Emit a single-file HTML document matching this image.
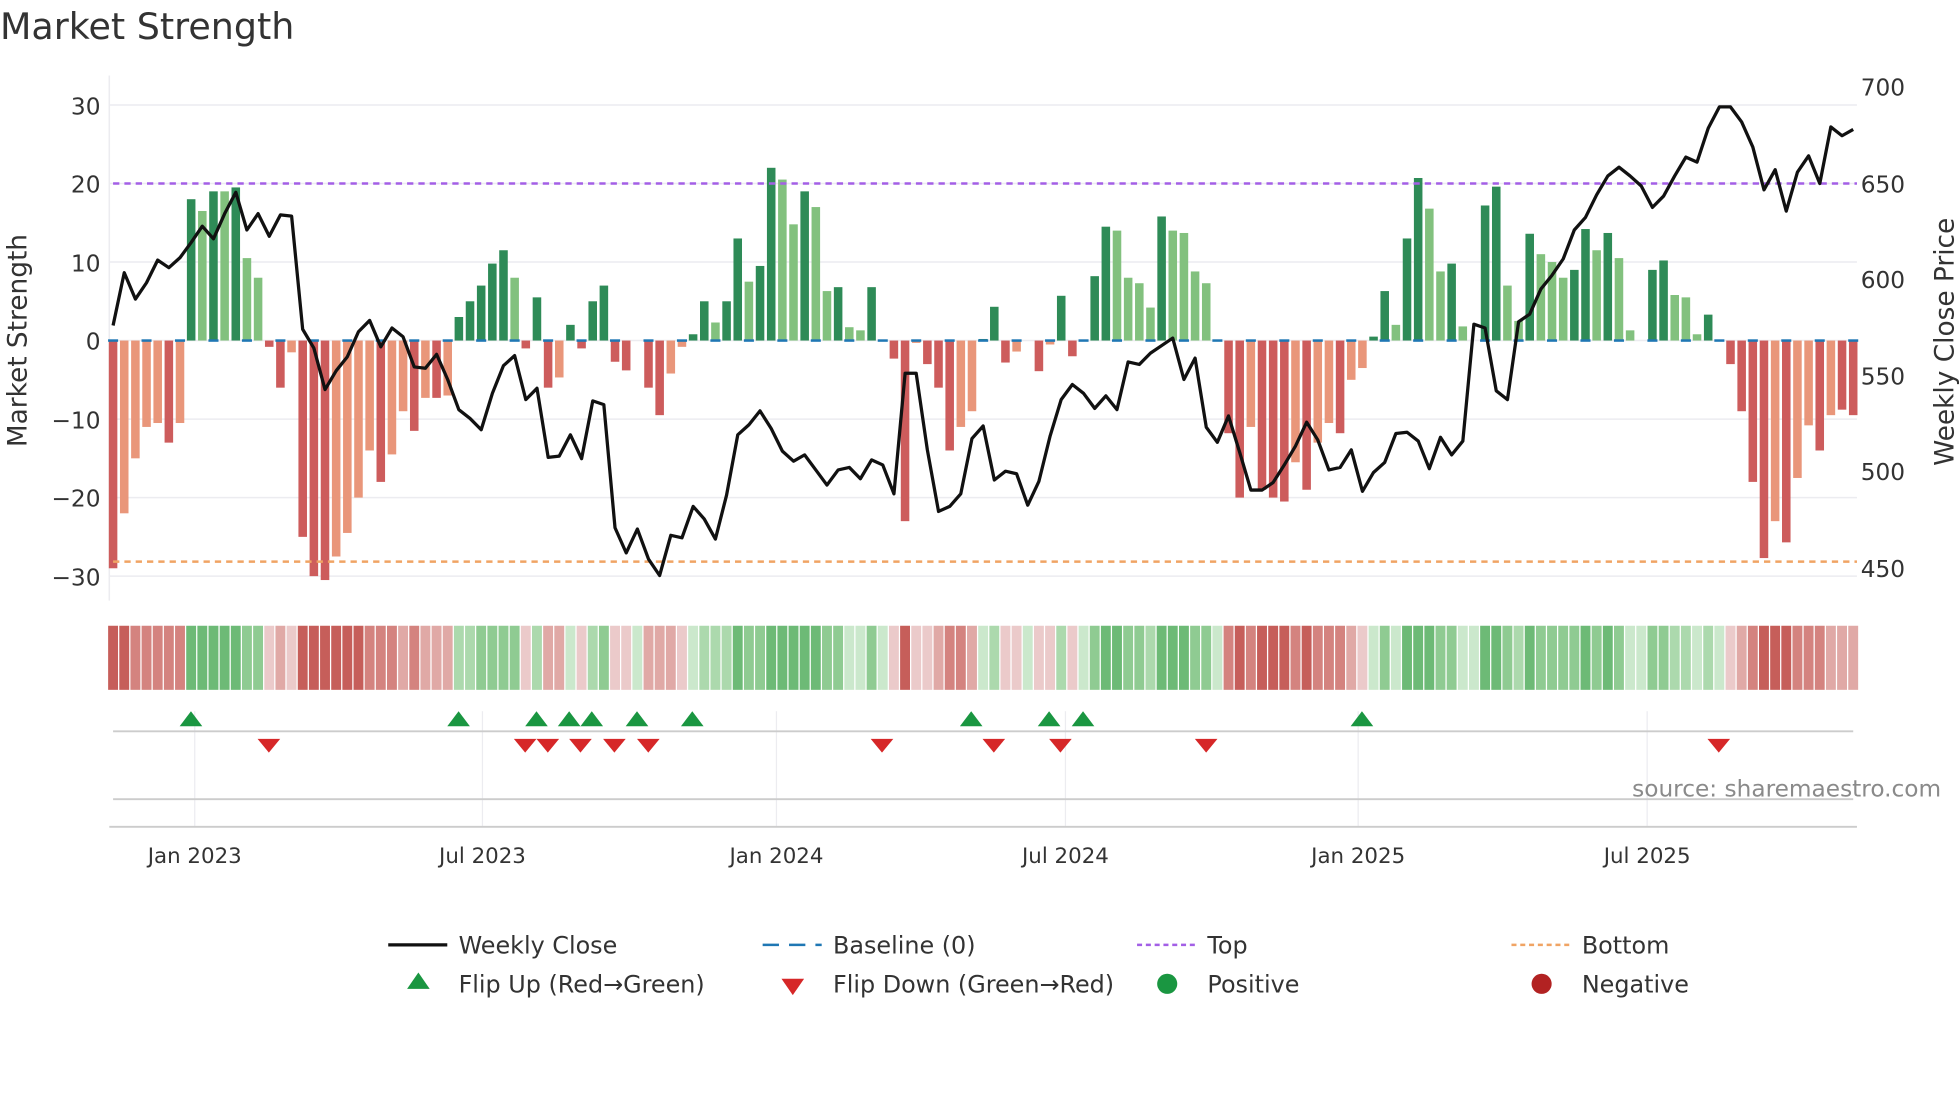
<!DOCTYPE html>
<html><head><meta charset="utf-8"><style>
html,body{margin:0;padding:0;background:#fff;}
svg{display:block;font-family:"DejaVu Sans","Liberation Sans",sans-serif;}
</style></head><body>
<svg id="s" width="1960" height="1102" viewBox="0 0 1560 877" xmlns="http://www.w3.org/2000/svg">
<rect width="1560" height="877" fill="#fff"/>
<text x="0" y="31" font-size="29" fill="#333">Market Strength</text>
<g id="grid" stroke="#ececf0" stroke-width="1.2"></g>
<g id="bars"></g>
<line x1="90" y1="146" x2="1478" y2="146" stroke="#a35fe6" stroke-width="2" stroke-dasharray="5,4"/>
<line x1="90" y1="447" x2="1478" y2="447" stroke="#f0a464" stroke-width="2" stroke-dasharray="5,4"/>
<g id="base"></g>
<polyline id="pl" fill="none" stroke="#111" stroke-width="2.6" stroke-linejoin="round"/>
<g font-size="18.5" fill="#333" text-anchor="end">
<text x="80" y="91">30</text><text x="80" y="153">20</text><text x="80" y="216">10</text><text x="80" y="278">0</text>
<text x="80" y="341">−10</text><text x="80" y="403">−20</text><text x="80" y="466">−30</text>
</g>
<g font-size="18.5" fill="#333">
<text x="1481" y="76">700</text><text x="1481" y="153">650</text><text x="1481" y="229">600</text>
<text x="1481" y="306">550</text><text x="1481" y="382">500</text><text x="1481" y="459">450</text>
</g>
<text transform="translate(21,271) rotate(-90)" font-size="21" fill="#333" text-anchor="middle">Market Strength</text>
<text transform="translate(1555,272) rotate(-90)" font-size="21" fill="#333" text-anchor="middle">Weekly Close Price</text>
<g id="heat"></g>
<g stroke="#ececf0" stroke-width="1">
<line x1="155" y1="566" x2="155" y2="658"/><line x1="384" y1="566" x2="384" y2="658"/><line x1="618" y1="566" x2="618" y2="658"/>
<line x1="848" y1="566" x2="848" y2="658"/><line x1="1081" y1="566" x2="1081" y2="658"/><line x1="1311" y1="566" x2="1311" y2="658"/>
</g>
<line x1="90" y1="582" x2="1475" y2="582" stroke="#ccc" stroke-width="1.5"/>
<line x1="90" y1="636" x2="1475" y2="636" stroke="#ccc" stroke-width="1.5"/>
<line x1="87" y1="658" x2="1478" y2="658" stroke="#ccc" stroke-width="1.5"/>
<g id="mk"></g>
<text x="1545" y="634" font-size="18.5" fill="#8a8a8a" text-anchor="end">source: sharemaestro.com</text>
<g font-size="17" fill="#333" text-anchor="middle">
<text x="155" y="687">Jan 2023</text><text x="384" y="687">Jul 2023</text><text x="618" y="687">Jan 2024</text>
<text x="848" y="687">Jul 2024</text><text x="1081" y="687">Jan 2025</text><text x="1311" y="687">Jul 2025</text>
</g>
<g font-size="19" fill="#333">
<line x1="309" y1="752" x2="356" y2="752" stroke="#111" stroke-width="2.6"/>
<text x="365" y="759">Weekly Close</text>
<line x1="607" y1="752" x2="654" y2="752" stroke="#1f77b4" stroke-width="2" stroke-dasharray="13,8"/>
<text x="663" y="759">Baseline (0)</text>
<line x1="905" y1="752" x2="952" y2="752" stroke="#a35fe6" stroke-width="2" stroke-dasharray="4,3"/>
<text x="961" y="759">Top</text>
<line x1="1203" y1="752" x2="1250" y2="752" stroke="#f0a464" stroke-width="2" stroke-dasharray="4,3"/>
<text x="1259" y="759">Bottom</text>
<polygon points="333,774 324,787 342,787" fill="#1a9641"/>
<text x="365" y="790">Flip Up (Red→Green)</text>
<polygon points="622,779 640,779 631,792" fill="#d62728"/>
<text x="663" y="790">Flip Down (Green→Red)</text>
<circle cx="929" cy="783" r="8" fill="#1a9641"/>
<text x="961" y="790">Positive</text>
<circle cx="1227" cy="783" r="8" fill="#b22222"/>
<text x="1259" y="790">Negative</text>
</g>
</svg>
<script>
(function(){
var NS="http://www.w3.org/2000/svg";
function el(p,t,a){var e=document.createElementNS(NS,t);for(var k in a)e.setAttribute(k,a[k]);document.getElementById(p).appendChild(e);return e;}
[30,20,10,0,-10,-20,-30].forEach(function(v){var y=271-v*6.25;el("grid","line",{x1:87,y1:y,x2:1478,y2:y});});
el("grid","line",{x1:87,y1:60,x2:87,y2:478});
var B=[[-29,1],[-22,0],[-15,0],[-11,0],[-10.5,0],[-13,1],[-10.5,0],[18,1],[16.5,0],[19,1],[19,0],[19.5,1],[10.5,0],[8,0],[-0.8,1],[-6,1],[-1.5,0],[-25,1],[-30,1],[-30.5,1],[-27.5,0],[-24.5,0],[-20,0],[-14,0],[-18,1],[-14.5,0],[-9,0],[-11.5,1],[-7.3,0],[-7.3,1],[-7,0],[3,1],[5,1],[7,1],[9.8,1],[11.5,1],[8,0],[-1,1],[5.5,1],[-6,1],[-4.7,0],[2,1],[-1,1],[5,1],[7,1],[-2.7,1],[-3.8,1],[0,1],[-6,1],[-9.5,1],[-4.2,0],[-0.8,0],[0.8,1],[5,1],[2.3,0],[5,1],[13,1],[7.5,0],[9.5,1],[22,1],[20.5,0],[14.8,0],[19,1],[17,0],[6.3,0],[6.8,1],[1.7,0],[1.3,0],[6.8,1],[0,1],[-2.3,1],[-23,1],[-0.3,0],[-3,1],[-6,1],[-14,1],[-11,0],[-9,0],[0.2,1],[4.3,1],[-2.8,1],[-1.4,0],[0,1],[-3.9,1],[-0.5,0],[5.7,1],[-2,1],[0,1],[8.2,1],[14.5,1],[14,0],[8,0],[7.3,0],[4.2,0],[15.8,1],[14,0],[13.7,0],[8.8,0],[7.3,0],[0,1],[-11.8,1],[-20,1],[-11,0],[-19,1],[-20,1],[-20.5,1],[-15.5,0],[-19,1],[-13,0],[-10.5,0],[-11.8,1],[-5,0],[-3.5,0],[0.5,1],[6.3,1],[2,0],[13,1],[20.7,1],[16.8,0],[8.8,0],[9.8,1],[1.8,0],[0,1],[17.2,1],[19.6,1],[7,0],[2.5,0],[13.6,1],[11,0],[10,0],[8,0],[9,1],[14.2,1],[11.5,0],[13.7,1],[10.5,0],[1.3,0],[0,1],[9,1],[10.2,1],[5.8,0],[5.5,0],[0.8,0],[3.3,1],[0,1],[-3,1],[-9,1],[-18,1],[-27.7,1],[-23,0],[-25.7,1],[-17.5,0],[-10.8,0],[-14,1],[-9.5,0],[-8.8,1],[-9.5,1]];
var n=B.length,x0=90,x1=1475,st=(x1-x0)/(n-1);
B.forEach(function(b,i){
 var x=x0+i*st,v=b[0],h=Math.abs(v)*6.25,c;
 if(v>=0)c=b[1]?"#2e8b57":"#82c17e";else c=b[1]?"#cd5c5c":"#e9967a";
 if(h>0.3)el("bars","rect",{x:x-3.4,y:v>=0?271-h:271,width:6.8,height:h,fill:c});
 var a=Math.abs(v),hc;
 if(v>=0)hc=a>12?"#6dba76":a>6?"#8fcb92":a>2?"#acd9ad":"#cbe8cc";
 else hc=a>18?"#c65e5a":a>10?"#d4837f":a>4?"#e0a9a6":"#ebcaca";
 el("heat","rect",{x:x-st/2+0.5,y:498,width:st-1,height:51,fill:hc});
 if(i%3==0)el("base","line",{x1:x-4,y1:271,x2:x+4,y2:271,stroke:"#1f77b4","stroke-width":2});
});
var P=[259,217,238,225,207,213,205,193,180,190,170,153,183,170,188,171,172,262,277,310,295,284,264,255,276,261,268,292,293,282,302,326,333,342,313,291,283,318,309,364,363,346,365,319,322,420,440,421,445,458,426,428,403,413,429,394,346,338,327,341,359,367,362,374,386,374,372,381,366,370,393,297,297,358,407,403,393,349,339,382,375,377,402,383,347,318,306,313,325,315,326,288,290,281,275,269,302,285,340,352,331,360,390,390,384,370,355,336,350,374,372,358,391,376,368,345,344,351,373,348,362,351,258,261,311,318,256,250,230,219,206,183,173,155,140,133,140,148,165,156,140,125,129,102,85,85,97,117,151,135,168,137,124,146,101,108,103];
var m=P.length,s2=(1475-90)/(m-1),pts=[];
P.forEach(function(y,i){pts.push((90+i*s2).toFixed(1)+","+y);});
document.getElementById("pl").setAttribute("points",pts.join(" "));
[152,365,427,453,471,507,551,773,835,862,1084].forEach(function(x){el("mk","polygon",{points:x+",566 "+(x-9)+",578 "+(x+9)+",578",fill:"#1a9641"});});
[214,418,436,462,489,516,702,791,844,960,1368].forEach(function(x){el("mk","polygon",{points:(x-9)+",588 "+(x+9)+",588 "+x+",599",fill:"#d62728"});});
})();
</script>
</body></html>
